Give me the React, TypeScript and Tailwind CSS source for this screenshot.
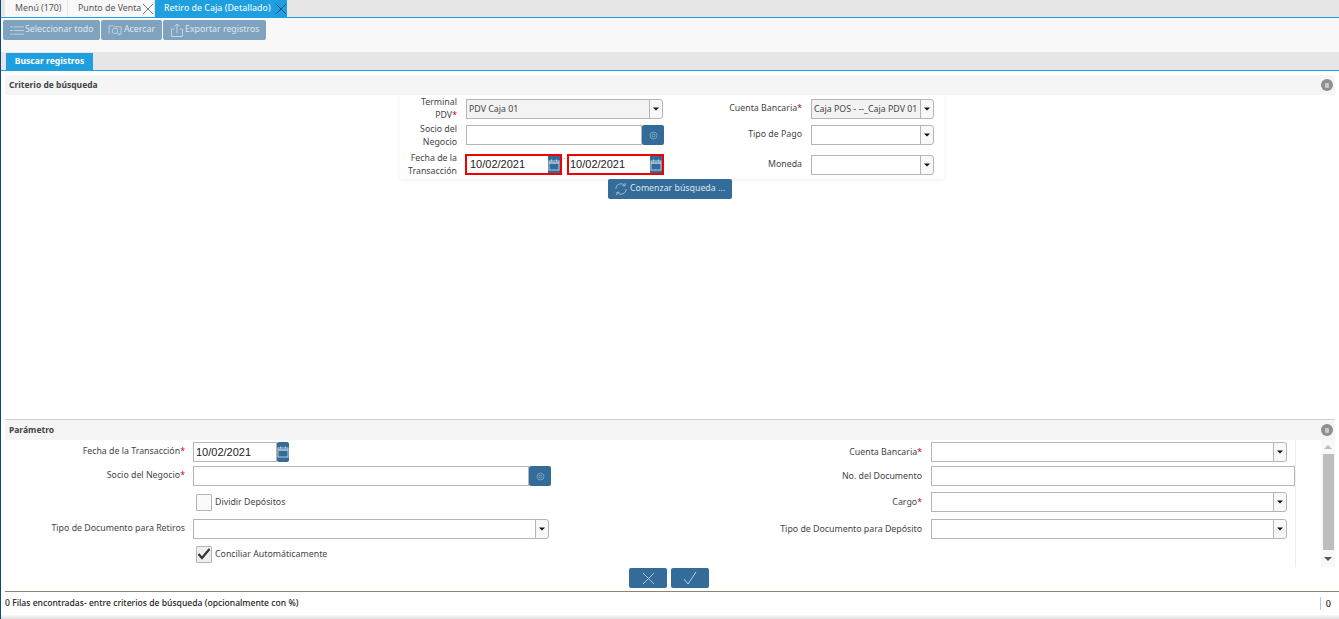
import React from "react";

const Cross = ({ cls }: { cls: string }) => (
  <svg viewBox="0 0 14 14" className={cls} fill="none" stroke="currentColor" strokeWidth="1"><path d="M1 1l12 12M13 1L1 13" /></svg>
);
const Caret = () => (
  <svg viewBox="0 0 6 4" className="w-[6px] h-[4px]"><path d="M0 0.5h6L3 3.5z" fill="#111" /></svg>
);
const Calendar = () => (
  <svg viewBox="0 0 12 12" className="w-[12px] h-[12px]" fill="none" stroke="#b9cfe0" strokeWidth="1"><rect x="1" y="2" width="10" height="9" /><path d="M1 4h10" strokeWidth="1.5" /><path d="M3.5 0.5v2M8.5 0.5v2" /></svg>
);
const LookupIcon = () => (
  <svg viewBox="0 0 12 12" className="w-[9px] h-[9px]" fill="none" stroke="#8fb0c9" strokeWidth="1"><circle cx="6" cy="6" r="4.6" /><circle cx="6" cy="6" r="2" /></svg>
);
const Req = () => <span className="text-[#d9001b]">*</span>;

function Combo({ w, value, gray }: { w: string; value?: string; gray?: boolean }) {
  return (
    <div className={`flex h-[20px] ${w}`}>
      <div className={`flex-1 min-w-0 border border-[#b5b5b5] px-[2px] text-[8.8px] leading-[18px] text-[#444] whitespace-nowrap overflow-hidden ${gray ? "bg-[#f3f3f3]" : "bg-white"}`}>{value}</div>
      <div className="w-[14px] -ml-px border border-[#b5b5b5] rounded-r-[3px] bg-[#f8f8f8] flex items-center justify-center"><Caret /></div>
    </div>
  );
}
function Lookup({ w }: { w: string }) {
  return (
    <div className={`flex h-[20px] ${w}`}>
      <div className="flex-1 border border-[#b5b5b5] bg-white" />
      <div className="w-[22px] bg-[#336b99] rounded-[2px] flex items-center justify-center"><LookupIcon /></div>
    </div>
  );
}
function RedDate({ w, pad }: { w: string; pad: string }) {
  return (
    <div className={`flex h-[21px] ${w} border-2 border-[#f00000] bg-white`}>
      <div className={`flex-1 ${pad} font-['Liberation_Sans',sans-serif] text-[11px] leading-[17px] text-[#222]`}>10/02/2021</div>
      <div className="w-[12px] bg-[#336b99] flex items-center justify-center"><Calendar /></div>
    </div>
  );
}
function SectionHeader({ title, cls, textCls }: { title: string; cls: string; textCls: string }) {
  return (
    <div className={`mx-[4px] pl-[4px] pr-[2px] bg-[#f5f5f5] flex items-center justify-between shrink-0 ${cls}`}>
      <span className={`font-bold text-[#444] ${textCls}`}>{title}</span>
      <span className="w-[12px] h-[12px] rounded-full bg-[#8f8f8f] flex items-center justify-center"><span className="w-[4px] h-[5px] rounded-[1px] bg-[#c9c9c9]" /></span>
    </div>
  );
}
function ToolButton({ w, icon, label }: { w: string; icon: React.ReactNode; label: string }) {
  return (
    <div className={`h-[20px] ${w} bg-[#7fa2bf] rounded-[2px] flex items-center pl-[7px] gap-[1px] text-[8.8px] text-[#dfe8ef] whitespace-nowrap`}>
      {icon}<span>{label}</span>
    </div>
  );
}
function Row({ label, children, right, mt }: { label: React.ReactNode; children: React.ReactNode; right?: React.ReactNode; mt: string }) {
  return (
    <div className={`flex items-center h-[20px] ${mt}`}>
      <div className="w-[180px] text-right text-[8.8px] text-[#444] whitespace-nowrap">{label}</div>
      <div className="w-[358px] ml-[8px]">{children}</div>
      {right}
    </div>
  );
}
function RightField({ label, children }: { label: React.ReactNode; children: React.ReactNode }) {
  return (
    <>
      <div className="w-[371px] text-right text-[8.8px] text-[#444] whitespace-nowrap pt-[1px]">{label}</div>
      <div className="ml-[9px]">{children}</div>
    </>
  );
}

export default function App() {
  return (
    <div className="w-[1339px] h-[619px] flex flex-col overflow-hidden bg-white border-l border-[#0b4a7d] font-['Noto_Sans','Open_Sans',sans-serif]">
      <div className="h-[17px] bg-[#e6e6e6] flex pl-[4px] gap-px text-[8.8px] shrink-0 whitespace-nowrap">
        <div className="w-[62px] h-full bg-[#f8f8f8] flex items-center pl-[10px] text-[#555]">Menú (170)</div>
        <div className="w-[86px] h-full bg-[#f8f8f8] flex items-center pl-[10px] text-[#555] justify-between">Punto de Venta<Cross cls="w-[12px] h-[12px] text-[#666]" /></div>
        <div className="w-[132px] h-full bg-[#1e9fe0] flex items-center pl-[9px] justify-between text-[#e8f5fd] font-medium">Retiro de Caja (Detallado)<Cross cls="w-[12px] h-[12px] text-[#14435f]" /></div>
      </div>
      <div className="h-[35px] shrink-0 bg-[#f8f8f8] border-t border-[#1e9fe0] pt-[2px] pl-[2px] flex gap-px">
        <ToolButton w="w-[97px]" label="Seleccionar todo" icon={<svg viewBox="0 0 15 12" className="w-[14px] h-[11px]" fill="none" stroke="#c5d5e2"><path d="M0 2h3M4 2h11M0 6h3M4 6h11M0 10h3M4 10h11" /></svg>} />
        <ToolButton w="w-[61px]" label="Acercar" icon={<svg viewBox="0 0 16 13" className="w-[15px] h-[12px]" fill="none" stroke="#c5d5e2"><path d="M1 11V2h5l1 1h7v8h-3" /><circle cx="7.5" cy="7.5" r="3" /><path d="M10 10l3 2.5" /></svg>} />
        <ToolButton w="w-[103px]" label="Exportar registros" icon={<svg viewBox="0 0 14 14" className="w-[14px] h-[14px]" fill="none" stroke="#c5d5e2"><path d="M4 6H1.5v7.5h11V6H10M7 10V1M4.5 3.5L7 1l2.5 2.5" /></svg>} />
      </div>
      <div className="h-[19px] shrink-0 bg-[#e6e6e6] pl-[5px] pt-px border-b border-[#1e9fe0]">
        <div className="w-[87px] h-[17px] bg-[#1e9fe0] text-white text-[8.6px] font-bold flex items-center justify-center">Buscar registros</div>
      </div>
      <div className="h-[4px] shrink-0" />
      <SectionHeader title="Criterio de búsqueda" cls="h-[20px]" textCls="text-[8.5px]" />

      <div className="ml-[399px] w-[544px] h-[84px] shrink-0 shadow-[0_1px_3px_rgba(0,0,0,0.08)] flex text-[8.8px] text-[#444] pt-[3px]">
        <div className="w-[265px] flex flex-col">
          <div className="flex items-center h-[22px]">
            <div className="w-[57px] text-right leading-[13px]">Terminal<br />PDV<Req /></div>
            <div className="ml-[9px]"><Combo w="w-[197px]" value="PDV Caja 01" gray /></div>
          </div>
          <div className="flex items-center h-[24px] mt-[3px]">
            <div className="w-[57px] text-right leading-[13px] pt-[1px]">Socio del<br />Negocio</div>
            <div className="ml-[9px]"><Lookup w="w-[198px]" /></div>
          </div>
          <div className="flex items-center h-[25px] mt-[5px]">
            <div className="w-[57px] text-right leading-[13px] whitespace-nowrap">Fecha de la<br />Transacción</div>
            <div className="ml-[8px] flex items-center">
              <RedDate w="w-[97px]" pad="pl-[3px]" />
              <span className="w-[5px] text-center text-[7px] leading-[7px] self-start text-[#777]">-</span>
              <RedDate w="w-[97px]" pad="pl-[1px]" />
            </div>
          </div>
        </div>
        <div className="flex flex-col">
          <div className="flex items-center h-[22px]">
            <div className="w-[137px] text-right">Cuenta Bancaria<Req /></div>
            <div className="ml-[9px]"><Combo w="w-[123px]" value="Caja POS - --_Caja PDV 01" gray /></div>
          </div>
          <div className="flex items-center h-[24px] mt-[3px]">
            <div className="w-[137px] text-right">Tipo de Pago</div>
            <div className="ml-[9px]"><Combo w="w-[123px]" /></div>
          </div>
          <div className="flex items-center h-[25px] mt-[5px]">
            <div className="w-[137px] text-right">Moneda</div>
            <div className="ml-[9px]"><Combo w="w-[123px]" /></div>
          </div>
        </div>
      </div>

      <div className="ml-[607px] w-[124px] h-[20px] shrink-0 bg-[#336b99] rounded-[2px] flex items-center pl-[6px] gap-[2px] text-[#dce7f0] text-[8.8px] whitespace-nowrap">
        <svg viewBox="0 0 16 16" className="w-[14px] h-[14px]" fill="none" stroke="#a9c2d6" strokeWidth="1"><path d="M2 8a6 6 0 0 1 10.5-4M14 8a6 6 0 0 1-10.5 4M12.8 1v3.3H9.5M3.2 15v-3.3h3.3" /></svg>
        Comenzar búsqueda ...
      </div>
      <div className="flex-1" />

      <SectionHeader title="Parámetro" cls="h-[21px] border-t border-[#d0d0cc]" textCls="text-[8.5px]" />
      <div className="h-[127px] shrink-0 ml-[4px] mr-[4px] flex">
        <div className="w-[1291px] border-r border-[#eeeeee]">
          <Row mt="mt-[2px]" label={<>Fecha de la Transacción<Req /></>}
            right={<RightField label={<>Cuenta Bancaria<Req /></>}><Combo w="w-[356px]" /></RightField>}>
            <div className="flex h-[20px] w-[96px]">
              <div className="flex-1 border border-[#b5b5b5] bg-white pl-[2px] font-['Liberation_Sans',sans-serif] text-[11px] leading-[18px] text-[#222]">10/02/2021</div>
              <div className="w-[12px] bg-[#336b99] rounded-[2px] flex items-center justify-center"><Calendar /></div>
            </div>
          </Row>
          <Row mt="mt-[4px]" label={<>Socio del Negocio<Req /></>}
            right={<RightField label="No. del Documento"><div className="w-[364px] h-[20px] border border-[#b5b5b5] bg-white" /></RightField>}>
            <Lookup w="w-[358px]" />
          </Row>
          <Row mt="mt-[6px]" label=""
            right={<RightField label={<>Cargo<Req /></>}><Combo w="w-[356px]" /></RightField>}>
            <div className="flex items-center h-[20px] ml-[3px] gap-[3px] text-[8.8px] text-[#444]">
              <div className="w-[16px] h-[17px] border border-[#b5b5b5] rounded-[1px] bg-[#fafafa]" /><span className="pt-[2px]">Dividir Depósitos</span>
            </div>
          </Row>
          <Row mt="mt-[7px]" label="Tipo de Documento para Retiros"
            right={<RightField label="Tipo de Documento para Depósito"><Combo w="w-[356px]" /></RightField>}>
            <Combo w="w-[356px]" />
          </Row>
          <Row mt="mt-[5px]" label="">
            <div className="flex items-center h-[20px] ml-[3px] gap-[3px] text-[8.8px] text-[#444]">
              <div className="w-[16px] h-[17px] border border-[#b5b5b5] rounded-[1px] bg-[#efefef] flex items-center justify-center">
                <svg viewBox="0 0 14 12" className="w-[14px] h-[12px]" fill="none" stroke="#333" strokeWidth="2.2"><path d="M1.5 6l3.5 4 7.5-9" /></svg>
              </div><span className="pt-[2px]">Conciliar Automáticamente</span>
            </div>
          </Row>
        </div>
        <div className="w-[15px] ml-[25px] bg-[#f8f8f8] flex flex-col items-center">
          <div className="h-[14px] flex items-center"><svg viewBox="0 0 8 4" className="w-[8px] h-[4px]"><path d="M0 4h8L4 0z" fill="#bbb" /></svg></div>
          <div className="flex-1 w-[11px] bg-[#bdbdbd]" />
          <div className="h-[17px] flex items-center"><svg viewBox="0 0 8 4" className="w-[8px] h-[4px]"><path d="M0 0h8L4 4z" fill="#555" /></svg></div>
        </div>
      </div>

      <div className="h-[20px] shrink-0 ml-[628px] flex gap-[4px] mt-px">
        <div className="w-[38px] h-[20px] bg-[#336b99] rounded-[2px] flex items-center justify-center"><Cross cls="w-[13px] h-[13px] text-[#b9cfe0]" /></div>
        <div className="w-[38px] h-[20px] bg-[#336b99] rounded-[2px] flex items-center justify-center"><svg viewBox="0 0 14 14" className="w-[14px] h-[14px]" fill="none" stroke="#b9cfe0"><path d="M1 8l4 5 8-12" /></svg></div>
      </div>
      <div className="h-[24px] shrink-0 mt-[3px] ml-[4px] border-t border-[#8a8570] flex items-center justify-between text-[8.6px] font-medium text-[#222]">
        <span>0 Filas encontradas- entre criterios de búsqueda (opcionalmente con %)</span>
        <span className="border-l border-[#a9c9ee] pl-[5px] pr-[8px] text-[9px] leading-[13px]">0</span>
      </div>
      <div className="h-[4px] shrink-0 bg-gradient-to-b from-[#f8f8f8] to-[#e0e0e0]" />
    </div>
  );
}
